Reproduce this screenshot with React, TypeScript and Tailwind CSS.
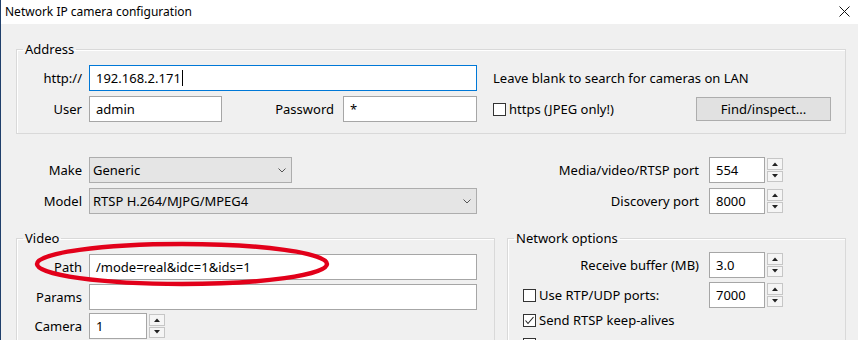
import React from 'react';

const font = "font-['Noto_Sans',sans-serif]";

function TextBox({ className, children, focused }: { className: string; children?: React.ReactNode; focused?: boolean }) {
  return (
    <div
      className={`h-[26px] flex items-center bg-white border pl-[6px] ${focused ? 'border-[#0078d7]' : 'border-[#a6a6a6]'} ${className}`}
    >
      {children}
    </div>
  );
}

function Arrow({ up }: { up?: boolean }) {
  return (
    <svg width="6" height="4" viewBox="0 0 6 4">
      <polygon points={up ? '0,4 3,0.5 6,4' : '0,0 6,0 3,3.5'} fill="#222" />
    </svg>
  );
}

function Spinner({ value, w }: { value: string; w: string }) {
  return (
    <div className="flex h-[26px]">
      <TextBox className={w}>{value}</TextBox>
      <div className="w-[18px] flex flex-col gap-[1px] pl-[2px] py-[1px]">
        <div className="flex-1 flex items-center justify-center border border-[#c6c6c6] bg-[#f5f5f5]">
          <Arrow up />
        </div>
        <div className="flex-1 flex items-center justify-center border border-[#c6c6c6] bg-[#f5f5f5]">
          <Arrow />
        </div>
      </div>
    </div>
  );
}

function Combo({ value, w }: { value: string; w: string }) {
  return (
    <div className={`h-[26px] ${w} flex items-center justify-between bg-[#e5e5e5] border border-[#adadad] pl-[3px] pr-[5px]`}>
      <span>{value}</span>
      <svg width="8" height="5" viewBox="0 0 8 5">
        <polyline points="0.5,0.5 4,4 7.5,0.5" fill="none" stroke="#555" strokeWidth="1" />
      </svg>
    </div>
  );
}

function Check({ checked }: { checked?: boolean }) {
  return (
    <div className="w-[13px] h-[13px] border border-[#333] bg-white flex items-center justify-center shrink-0">
      {checked && (
        <svg width="11" height="11" viewBox="0 0 11 11">
          <polyline points="1.5,5.5 4,8.5 9.5,2" fill="none" stroke="#222" strokeWidth="1.1" />
        </svg>
      )}
    </div>
  );
}

function Label({ children, w = 'w-[66px]' }: { children: React.ReactNode; w?: string }) {
  return <div className={`${w} text-right pr-[1px] shrink-0`}>{children}</div>;
}

function Group({ title, className, children }: { title: string; className: string; children: React.ReactNode }) {
  return (
    <fieldset className={`border border-[#d9d9d9] shadow-[inset_1px_1px_0_#fff] ${className}`}>
      <legend className="ml-[6px] px-[2px] leading-[16px]">{title}</legend>
      {children}
    </fieldset>
  );
}

export default function App() {
  return (
    <div className={`relative w-[858px] h-[340px] overflow-hidden border-l border-[#1f3f6b] bg-[#f0f0f0] text-[13px] leading-[16px] text-black ${font}`}>
      {/* Title bar */}
      <div className="h-[24px] bg-white flex items-center justify-between pl-[4px] pr-[8px] text-[12px]">
        <span>Network IP camera configuration</span>
        <svg width="11" height="11" viewBox="0 0 11 11" className="mb-[1px]">
          <path d="M0.5 0.5 L10.5 10.5 M10.5 0.5 L0.5 10.5" stroke="#111" strokeWidth="1" />
        </svg>
      </div>

      <div className="pl-[15px]">
        {/* Address */}
        <Group title="Address" className="mt-[17px] w-[830px] pt-[8px] pb-[11px]">
          <div className="flex flex-col gap-[5px]">
            <div className="flex items-center">
              <Label>http://</Label>
              <TextBox focused className="ml-[6px] w-[388px]">
                <span>192.168.2.171</span>
                <span className="w-[1px] h-[16px] bg-black ml-[1px]" />
              </TextBox>
              <span className="ml-[16px]">Leave blank to search for cameras on LAN</span>
            </div>
            <div className="flex items-center">
              <Label>User</Label>
              <TextBox className="ml-[6px] w-[133px]">admin</TextBox>
              <Label w="w-[113px]">Password</Label>
              <TextBox className="ml-[8px] w-[134px]">*</TextBox>
              <div className="ml-[16px] w-[203px] flex items-center gap-[3px]">
                <Check />
                <span>https (JPEG only!)</span>
              </div>
              <div className="w-[135px] h-[24px] flex items-center justify-center bg-[#e1e1e1] border border-[#adadad]">
                Find/inspect...
              </div>
            </div>
          </div>
        </Group>

        {/* Make / Model */}
        <div className="mt-[23px] flex flex-col gap-[5px]">
          <div className="flex items-center">
            <div className="w-[461px] flex items-center pl-[1px]">
              <Label>Make</Label>
              <div className="ml-[6px]">
                <Combo value="Generic" w="w-[203px]" />
              </div>
            </div>
            <Label w="w-[223px]">Media/video/RTSP port</Label>
            <div className="ml-[9px]">
              <Spinner value="554" w="w-[56px]" />
            </div>
          </div>
          <div className="flex items-center">
            <div className="w-[461px] flex items-center pl-[1px]">
              <Label>Model</Label>
              <div className="ml-[6px]">
                <Combo value="RTSP H.264/MJPG/MPEG4" w="w-[388px]" />
              </div>
            </div>
            <Label w="w-[223px]">Discovery port</Label>
            <div className="ml-[9px]">
              <Spinner value="8000" w="w-[56px]" />
            </div>
          </div>
        </div>

        {/* Video + Network options */}
        <div className="mt-[16px] flex items-start gap-[12px]">
          <Group title="Video" className="w-[479px] h-[140px] pt-[8px]">
            <div className="flex flex-col">
              <div className="flex items-center">
                <Label>Path</Label>
                <TextBox className="ml-[6px] w-[388px]">/mode=real&amp;idc=1&amp;ids=1</TextBox>
              </div>
              <div className="flex items-center mt-[4px]">
                <Label>Params</Label>
                <TextBox className="ml-[6px] w-[388px]" />
              </div>
              <div className="flex items-center mt-[3px]">
                <Label>Camera</Label>
                <div className="ml-[6px]">
                  <Spinner value="1" w="w-[58px]" />
                </div>
              </div>
            </div>
          </Group>

          <Group title="Network options" className="w-[339px] h-[140px] pt-[6px]">
            <div className="flex flex-col">
              <div className="flex items-center">
                <Label w="w-[192px]">Receive buffer (MB)</Label>
                <div className="ml-[9px]">
                  <Spinner value="3.0" w="w-[56px]" />
                </div>
              </div>
              <div className="flex items-center mt-[4px]">
                <div className="w-[192px] pl-[15px] flex items-center gap-[3px]">
                  <Check />
                  <span>Use RTP/UDP ports:</span>
                </div>
                <div className="ml-[9px]">
                  <Spinner value="7000" w="w-[56px]" />
                </div>
              </div>
              <div className="h-[22px] mt-[1px] pl-[15px] flex items-center gap-[3px]">
                <Check checked />
                <span>Send RTSP keep-alives</span>
              </div>
              <div className="mt-[7px] pl-[15px] flex">
                <Check />
              </div>
            </div>
          </Group>
        </div>
      </div>

      {/* Red annotation ellipse */}
      <svg className="absolute left-[32px] top-[240px]" width="298" height="48" viewBox="0 0 298 48">
        <ellipse cx="149" cy="24" rx="145" ry="20" fill="none" stroke="#e2001a" strokeWidth="4.5" />
      </svg>
    </div>
  );
}
